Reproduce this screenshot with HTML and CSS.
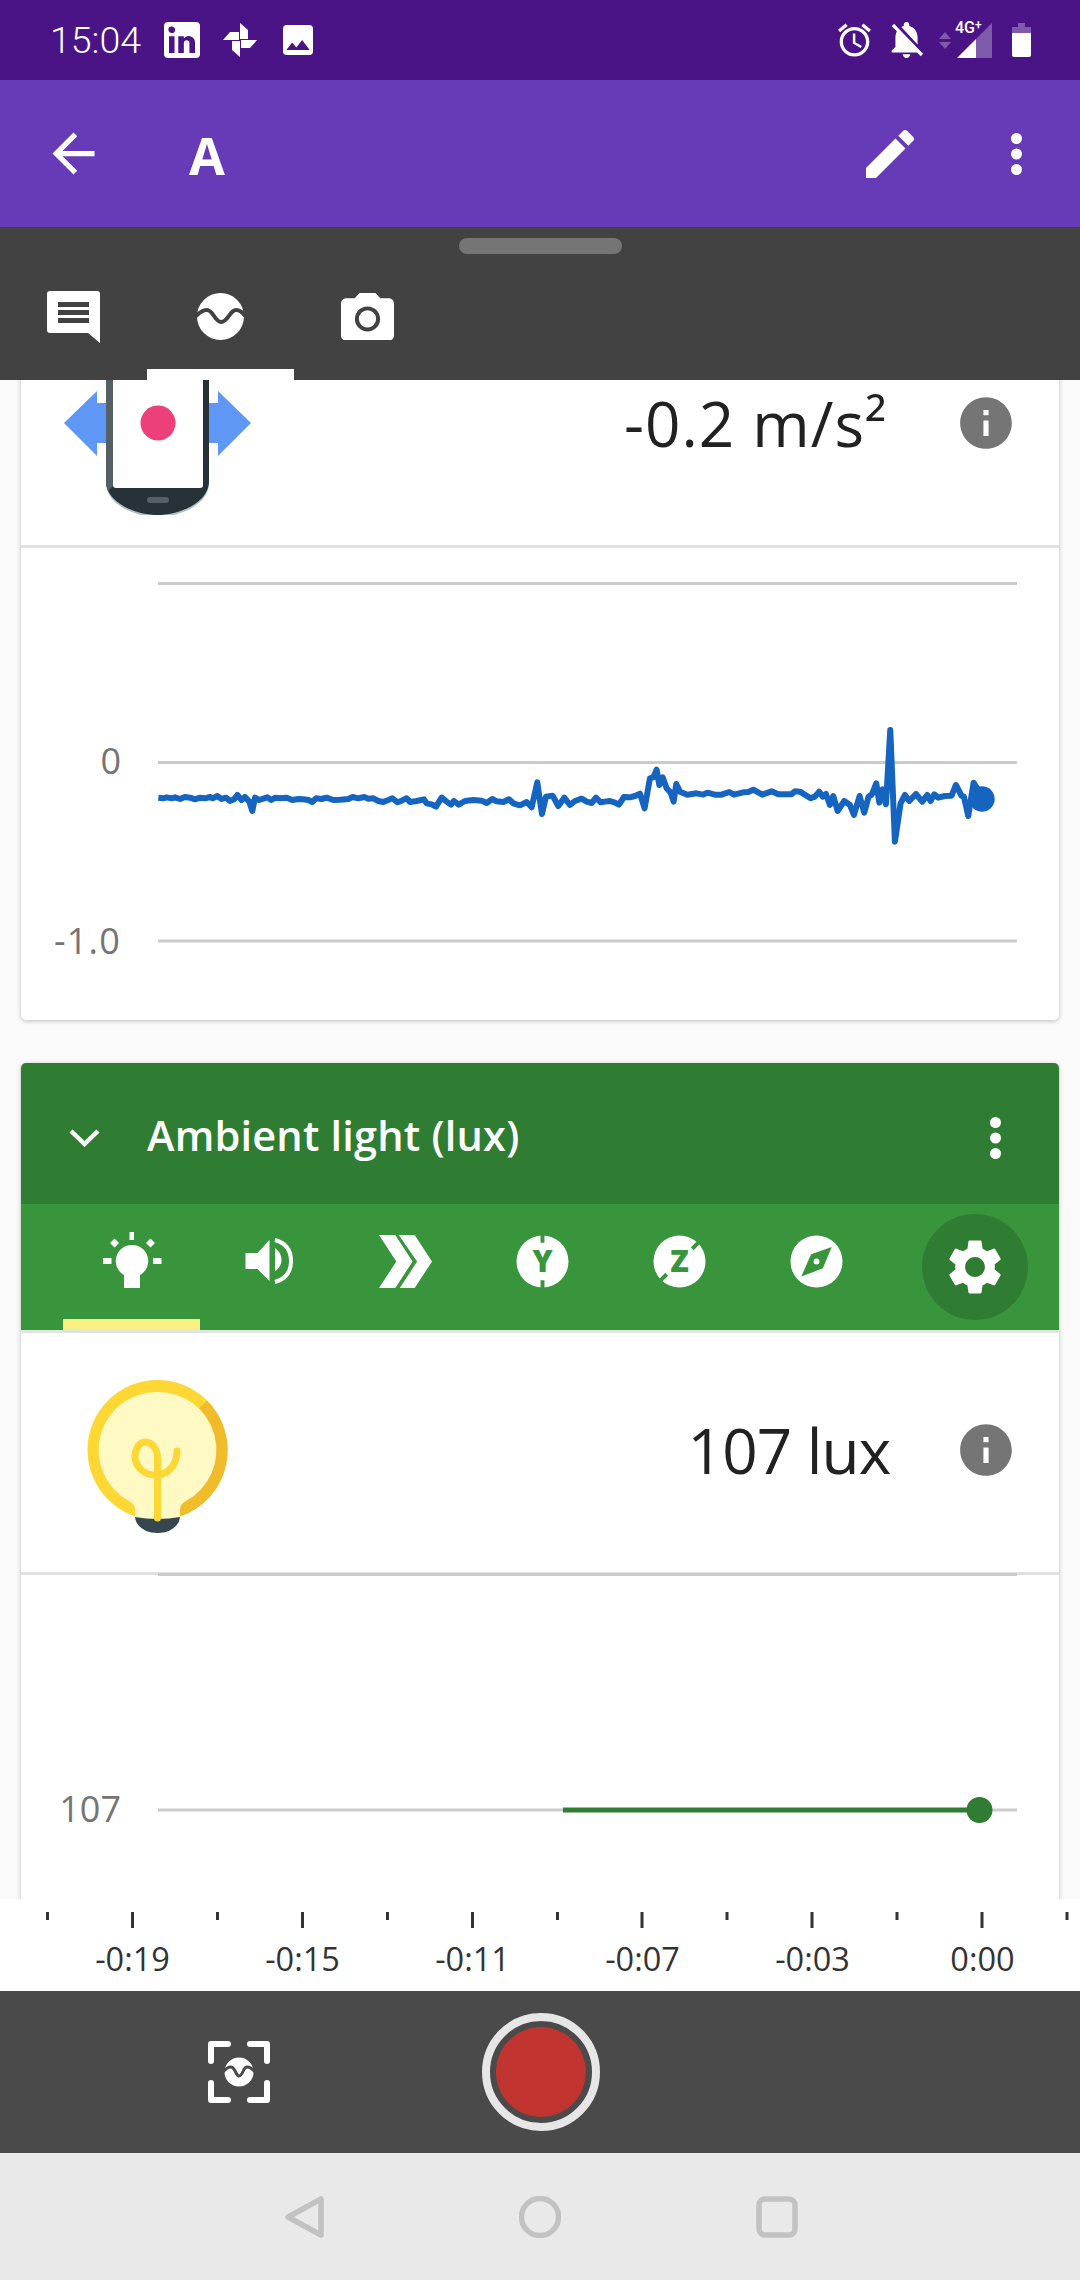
FILE: index.html
```html
<!DOCTYPE html>
<html lang="en">
<head>
  <meta charset="UTF-8" />
  <meta name="viewport" content="width=device-width, initial-scale=1.0"/>
  <title>Experiment A</title>
  <link rel="stylesheet" href="styles.css">
</head>
<body>
<div class="screen">

  <!-- Status bar -->
  <div class="status-bar">
    <span class="clock">15:04</span>
    <svg class="ic-linkedin" viewBox="3 3 18 18"><path d="M19 3a2 2 0 0 1 2 2v14a2 2 0 0 1-2 2H5a2 2 0 0 1-2-2V5a2 2 0 0 1 2-2h14m-.5 15.5v-5.3a3.26 3.26 0 0 0-3.26-3.26c-.85 0-1.84.52-2.32 1.3v-1.11h-2.79v8.37h2.79v-4.93c0-.77.62-1.4 1.39-1.4a1.4 1.4 0 0 1 1.4 1.4v4.93h2.79M6.88 8.56a1.68 1.68 0 0 0 1.68-1.68c0-.93-.75-1.69-1.68-1.69a1.69 1.69 0 0 0-1.69 1.69c0 .93.76 1.68 1.69 1.68m1.39 9.94v-8.37H5.5v8.37h2.77z"/></svg>
    <svg class="ic-pinwheel" viewBox="-17 -17 34 34">
      <path id="petal" d="M0 -1V-17L8 -10V-1Z"/>
      <use href="#petal" transform="rotate(90)"/>
      <use href="#petal" transform="rotate(180)"/>
      <use href="#petal" transform="rotate(270)"/>
    </svg>
    <svg class="ic-image" viewBox="3 3 18 18"><path d="M21 19V5c0-1.1-.9-2-2-2H5c-1.1 0-2 .9-2 2v14c0 1.1.9 2 2 2h14c1.1 0 2-.9 2-2zM8.5 13.5l2.5 3.01L14.5 12l4.5 6H5l3.5-4.5z"/></svg>

    <svg class="ic-alarm" viewBox="2 1.86 20 20.14"><path d="M22 5.72l-4.6-3.86-1.29 1.53 4.6 3.86L22 5.72zM7.88 3.39L6.6 1.86 2 5.71l1.29 1.53 4.59-3.85zM12.5 8H11v6l4.75 2.85.75-1.23-4-2.37V8zM12 4c-4.97 0-9 4.03-9 9s4.03 9 9 9c4.97 0 9-4.03 9-9s-4.03-9-9-9zm0 16c-3.87 0-7-3.13-7-7s3.13-7 7-7 7 3.13 7 7-3.13 7-7 7z"/></svg>
    <svg class="ic-belloff" viewBox="3 2.5 18 19.5"><path d="M20 18.69L7.84 6.14 5.27 3.49 4 4.76l2.8 2.8v.01c-.52.99-.8 2.16-.8 3.42v5l-2 2v1h13.73l2 2L21 19.72l-1-1.03zM12 22c1.11 0 2-.89 2-2h-4c0 1.11.89 2 2 2zm6-7.32V11c0-3.08-1.64-5.64-4.5-6.32V4c0-.83-.67-1.5-1.5-1.5s-1.5.67-1.5 1.5v.68c-.15.03-.29.08-.42.12-.1.03-.2.07-.3.11h-.01c-.2.08-.4.17-.59.27-.01 0-.01 0-.02.01L18 14.68z"/></svg>
    <svg class="ic-updown" viewBox="0 0 12 17"><path d="M6 0l6 7H0zM0 10h12l-6 7z"/></svg>
    <div class="signal">
      <svg class="ic-signal" viewBox="0 0 35 35">
        <path class="dim" d="M19 16L35 0V35H19Z"/>
        <path d="M0 35L19 16V35Z"/>
      </svg>
      <span class="net">4G<sup>+</sup></span>
    </div>
    <svg class="ic-battery" viewBox="0 0 19 34">
      <path class="dim" d="M6 0H13V4H19V10H0V4H6Z"/>
      <path d="M0 10H19V32a2 2 0 0 1-2 2H2a2 2 0 0 1-2-2Z"/>
    </svg>
  </div>

  <!-- App bar -->
  <div class="app-bar">
    <svg class="ic-back" viewBox="0 0 24 24"><path d="M20 11H7.83l5.59-5.59L12 4l-8 8 8 8 1.41-1.41L7.83 13H20v-2z"/></svg>
    <span class="app-title">A</span>
    <svg class="ic-edit" viewBox="0 0 24 24"><path d="M3 17.25V21h3.75L17.81 9.94l-3.75-3.75L3 17.25zM20.71 7.04c.39-.39.39-1.02 0-1.41l-2.34-2.34c-.39-.39-1.02-.39-1.41 0l-1.83 1.83 3.75 3.75 1.83-1.83z"/></svg>
    <svg class="ic-more" viewBox="0 0 11 42"><circle cx="5.5" cy="5.5" r="5.5"/><circle cx="5.5" cy="21" r="5.5"/><circle cx="5.5" cy="36.5" r="5.5"/></svg>
  </div>

  <!-- Panel with note / sensor / camera tabs -->
  <div class="panel">
    <div class="handle"></div>
    <div class="panel-tabs">
      <div class="panel-tab">
        <svg class="ic-note" viewBox="0 0 53 52">
          <path d="M3 0H50a3 3 0 0 1 3 3V52L41 42H3a3 3 0 0 1-3-3V3a3 3 0 0 1 3-3Z"/>
          <path class="cut" d="M11 11H42V16H11ZM11 19H42V24H11ZM11 27H42V32H11Z"/>
        </svg>
      </div>
      <div class="panel-tab active">
        <svg class="ic-wave" viewBox="0 0 47 47">
          <circle cx="23.5" cy="23.5" r="23.5"/>
          <path class="cut-line" d="M-1 23Q5 17 10 17C16 17 18 29 24 29C31 29 33 17 39 17Q44 17 48 23"/>
        </svg>
      </div>
      <div class="panel-tab">
        <svg class="ic-camera" viewBox="2 2 20 18">
          <path d="M9 2L7.17 4H4c-1.1 0-2 .9-2 2v12c0 1.1.9 2 2 2h16c1.1 0 2-.9 2-2V6c0-1.1-.9-2-2-2h-3.17L15 2H9z"/>
          <circle class="cut-ring" cx="12" cy="11.8" r="4"/>
        </svg>
      </div>
    </div>
  </div>

  <!-- Scrolling cards -->
  <div class="content">
    <div class="card card-first">
      <div class="sensor-row">
        <svg class="sensor-icon" viewBox="0 0 187 184">
          <path class="arrow" d="M0 92L33 60V72H42V112H33V125Z"/>
          <path class="arrow" d="M187 92L154 60V72H145V112H154V125Z"/>
          <path class="phone-edge" d="M42 0H145V152C145 174 115 186 93.5 186C72 186 42 174 42 152Z"/>
          <path class="phone-body" d="M42 0H145V150C145 172 115 184 93.5 184C72 184 42 172 42 150Z"/>
          <path class="phone-side" d="M42 0H49V155L44 160C43 157 42 154 42 150Z"/>
          <path class="phone-screen" d="M49 0H139V154a3 3 0 0 1-3 3H52a3 3 0 0 1-3-3Z"/>
          <rect class="phone-slot" x="83" y="166" width="22" height="6" rx="3"/>
          <circle class="phone-dot" cx="94" cy="92" r="17.5"/>
        </svg>
        <span class="value value-accel">-0.2 m/s²</span>
        <svg class="ic-info" viewBox="0 0 24 24"><path d="M12 2C6.48 2 2 6.48 2 12s4.48 10 10 10 10-4.48 10-10S17.52 2 12 2zm1 15h-2v-6h2v6zm0-8h-2V7h2v2z"/></svg>
      </div>
      <svg class="chart chart-accel" viewBox="21 548 1038 472">
        <line class="grid" x1="158" y1="583.5" x2="1017" y2="583.5"/>
        <line class="grid" x1="158" y1="762.5" x2="1017" y2="762.5"/>
        <line class="grid" x1="158" y1="941" x2="1017" y2="941"/>
        <text class="axis-num" x="121" y="774" text-anchor="end">0</text>
        <text class="axis-num axis-num-wide" x="121" y="954" text-anchor="end">-1.0</text>
        <!-- traced trace, drawn in 3x units -->
        <g transform="translate(130 700) scale(.3333)">
          <polyline class="trace" points="85,293 100,295 110,292 125,295 135,292 150,297 165,291 180,293 195,298 210,293 225,295 240,291 248,295 262,288 275,297 288,293 300,303 312,298 322,285 335,300 345,291 358,305 367,333 375,293 388,300 400,296 412,292 424,300 436,293 450,295 470,293 487,300 505,297 520,298 535,300 547,306 558,295 575,297 590,293 610,300 630,299 655,297 668,291 685,295 703,291 715,296 730,295 745,303 760,306 775,300 787,295 803,307 815,302 830,295 840,306 860,303 882,298 890,310 905,313 918,320 935,293 950,305 963,314 972,303 986,314 1005,303 1030,300 1055,302 1070,309 1087,297 1100,304 1120,306 1137,298 1150,310 1170,316 1190,306 1205,322 1222,247 1236,342 1248,290 1268,287 1285,318 1303,293 1320,315 1335,303 1355,296 1370,305 1385,309 1398,293 1412,307 1425,305 1440,303 1455,308 1467,314 1482,291 1500,292 1515,288 1530,281 1544,325 1560,235 1570,232 1580,209 1588,255 1598,232 1610,265 1622,278 1631,305 1639,252 1650,275 1672,284 1700,280 1720,284 1732,278 1755,284 1775,284 1798,276 1812,284 1840,277 1855,276 1870,269 1897,284 1925,274 1945,283 1985,283 1995,274 2010,275 2042,295 2055,290 2068,275 2078,290 2088,282 2100,315 2110,288 2123,333 2143,303 2160,315 2172,345 2189,288 2203,338 2216,290 2225,285 2239,250 2248,308 2258,268 2268,313 2281,90 2295,425 2312,310 2325,285 2338,303 2358,282 2377,305 2392,285 2402,303 2413,283 2425,293 2445,288 2465,287 2478,255 2495,288 2502,290 2515,348 2531,248 2545,270 2556,297"/>
        </g>
        <circle class="trace-dot" cx="982" cy="799" r="12.7"/>
      </svg>
    </div>

    <div class="card card-light">
      <div class="card-header">
        <svg class="ic-chevron" viewBox="0 0 31 19"><polyline points="2,3 15.5,16 29,3"/></svg>
        <span class="card-title">Ambient light (lux)</span>
        <svg class="ic-more ic-more-card" viewBox="0 0 11 42"><circle cx="5.5" cy="5.5" r="5.5"/><circle cx="5.5" cy="21" r="5.5"/><circle cx="5.5" cy="36.5" r="5.5"/></svg>
      </div>

      <div class="sensor-tabs">
        <div class="sensor-tab active">
          <svg class="ic-tab" viewBox="0 0 58 58">
            <path d="M26.500 0H31V8H26.500ZM0 26H8.500V32H0ZM50 26H58.500V32H50ZM11.500 6.500L16 11L11.500 15.500L7 11ZM47.500 6.500L52 11L47.500 15.500L43 11Z"/>
            <path d="M29 13A16 16 0 0 1 37 43V56H21V43A16 16 0 0 1 29 13Z"/>
          </svg>
        </div>
        <div class="sensor-tab">
          <svg class="ic-tab ic-speaker" viewBox="0 0 48 48">
            <path d="M.5 16H12.500L24.500 3V44L12.500 32H.5Z"/>
            <path d="M30 11Q36.500 16 36.500 23Q36.500 30 30 34Z"/>
            <path class="stroke" d="M30 3C41 6 46 14 46 24C46 34 41 42 30 45"/>
          </svg>
        </div>
        <div class="sensor-tab">
          <svg class="ic-tab" viewBox="1100 552 153 160" preserveAspectRatio="none">
            <path d="M1100 552H1147L1197 632L1147 712H1100L1150 632ZM1157 552H1203L1253 632L1203 712H1160L1210 632Z"/>
          </svg>
        </div>
        <div class="sensor-tab">
          <svg class="ic-tab" viewBox="-27 -27 54 54">
            <circle r="26.500"/>
            <path class="notch" d="M0 -27V-19M0 19V27"/>
            <text class="axis-letter" y="11" text-anchor="middle">Y</text>
          </svg>
        </div>
        <div class="sensor-tab">
          <svg class="ic-tab" viewBox="-27 -27 54 54">
            <circle r="26.500"/>
            <path class="notch" d="M19 -19L13 -13M-19 19L-13 13"/>
            <text class="axis-letter" y="11" text-anchor="middle">Z</text>
          </svg>
        </div>
        <div class="sensor-tab">
          <svg class="ic-tab" viewBox="-27 -27 54 54">
            <circle r="26.500"/>
            <path class="notch-fill" d="M15.500 -14.700L6.500 7L-15.500 15.300L-5.500 -7.300Z"/>
            <circle cx="0" cy="0" r="3"/>
          </svg>
        </div>
        <div class="settings-btn">
          <svg class="ic-gear" viewBox="0 0 24 24"><path d="M19.14 12.94c.04-.3.06-.61.06-.94 0-.32-.02-.64-.07-.94l2.03-1.58c.18-.14.23-.41.12-.61l-1.92-3.32c-.12-.22-.37-.29-.59-.22l-2.39.96c-.5-.38-1.03-.7-1.62-.94l-.36-2.54c-.04-.24-.24-.41-.48-.41h-3.84c-.24 0-.43.17-.47.41l-.36 2.54c-.59.24-1.13.57-1.62.94l-2.39-.96c-.22-.08-.47 0-.59.22L2.74 8.87c-.12.21-.08.47.12.61l2.03 1.58c-.05.3-.09.63-.09.94s.02.64.07.94l-2.03 1.58c-.18.14-.23.41-.12.61l1.92 3.32c.12.22.37.29.59.22l2.39-.96c.5.38 1.03.7 1.62.94l.36 2.54c.05.24.24.41.48.41h3.84c.24 0 .44-.17.47-.41l.36-2.54c.59-.24 1.13-.56 1.62-.94l2.39.96c.22.08.47 0 .59-.22l1.92-3.32c.12-.22.07-.47-.12-.61l-2.01-1.58zM12 15.6c-1.98 0-3.6-1.62-3.6-3.6s1.62-3.6 3.6-3.6 3.6 1.62 3.6 3.6-1.62 3.6-3.6 3.6z"/></svg>
        </div>
      </div>

      <div class="sensor-row sensor-row-light">
        <svg class="sensor-icon" viewBox="0 0 187 184">
          <circle class="bulb-rim" cx="93.500" cy="92" r="70"/>
          <path class="bulb-shade" d="M143 42.500A70 70 0 0 1 116 158.500V150Q116 143 122 139A58 58 0 0 0 134.500 51Z"/>
          <path class="bulb-cap" d="M71 159H116C115 169 105 175 93.500 175C82 175 72 169 71 159Z"/>
          <path class="bulb-glass" d="M93.500 34A58 58 0 0 1 122 143Q116 146 116 152V159Q105 161 93.500 161Q82 161 71 159V152Q71 146 65 143A58 58 0 0 1 93.500 34Z"/>
          <path class="bulb-wire" d="M93.500 160V100C93.500 90 87 84 81 84C75 84 71 92 71 98C71 110 82 118 93.500 117C105 116 113 106 113 93"/>
        </svg>
        <span class="value value-light">107 lux</span>
        <svg class="ic-info" viewBox="0 0 24 24"><path d="M12 2C6.48 2 2 6.48 2 12s4.48 10 10 10 10-4.48 10-10S17.52 2 12 2zm1 15h-2v-6h2v6zm0-8h-2V7h2v2z"/></svg>
      </div>
      <svg class="chart chart-light" viewBox="21 1575 1038 400">
        <line class="grid" x1="158" y1="1574.500" x2="1017" y2="1574.500"/>
        <line class="grid" x1="158" y1="1810" x2="1017" y2="1810"/>
        <text class="axis-num" x="121" y="1822" text-anchor="end">107</text>
        <line class="level" x1="563" y1="1810" x2="979" y2="1810"/>
        <circle class="level-dot" cx="979.500" cy="1810" r="13"/>
      </svg>
    </div>
  </div>

  <!-- Time axis -->
  <div class="time-axis">
    <svg class="ticks" viewBox="0 0 1080 16">
      <path d="M47.500 0V8M132.500 0V16M217.500 0V8M302.500 0V16M387.500 0V8M472.500 0V16M557.500 0V8M642 0V16M727 0V8M812 0V16M897 0V8M982 0V16M1067 0V8"/>
    </svg>
    <div class="time-labels">
      <span>-0:19</span>
      <span>-0:15</span>
      <span>-0:11</span>
      <span>-0:07</span>
      <span>-0:03</span>
      <span>0:00</span>
    </div>
  </div>

  <!-- Record bar -->
  <div class="record-bar">
    <svg class="ic-snapshot" viewBox="0 0 62 62">
      <path class="bracket" d="M3 20V3H20M42 3H59V20M59 42V59H42M20 59H3V42"/>
      <circle cx="31" cy="31" r="14.500"/>
      <path class="cut-line-thin" d="M15 31Q19 26 23 26C27 26 28 35 31 35C35 35 35 26 39 26Q43 26 47 31"/>
    </svg>
    <div class="record-btn"><div class="record-dot"></div></div>
  </div>

  <!-- Android nav -->
  <div class="nav-bar">
    <svg class="nav-icon" viewBox="0 0 42 42"><path d="M4 21L37 3V39Z"/></svg>
    <svg class="nav-icon" viewBox="0 0 42 42"><circle cx="21" cy="21" r="18.500"/></svg>
    <svg class="nav-icon nav-recents" viewBox="0 0 42 42"><rect x="3" y="3" width="36" height="36" rx="6"/></svg>
  </div>
</div>
</body>
</html>
```

FILE: styles.css
```css
/* Global reset */
* {
  margin: 0;
  padding: 0;
  box-sizing: border-box;
}

body {
  font-family: 'Open Sans', 'Noto Sans', sans-serif;
  background: #fafafa;
  color: #212121;
}

svg {
  display: block;
  flex: none;
}

.screen {
  width: 1080px;
  height: 2280px;
  display: flex;
  flex-direction: column;
  overflow: hidden;
}

/* Status bar */
.status-bar {
  height: 80px;
  flex: none;
  background: #4a1486;
  display: flex;
  align-items: center;
  padding-left: 50px;
  color: #fff;
}
.status-bar svg { fill: #fff; }
.status-bar .dim { fill: rgba(255, 255, 255, 0.3); }

.clock {
  width: 114px;
  font-family: Roboto, sans-serif;
  font-size: 37.5px;
  font-weight: 300;
}
.ic-linkedin { width: 36px; height: 36px; }
.ic-pinwheel { width: 34px; height: 34px; margin-left: 23px; }
.ic-image { width: 30px; height: 30px; margin-left: 26px; }
.ic-alarm { width: 33px; height: 34px; margin-left: 525px; }
.ic-belloff { width: 35px; height: 36px; margin-left: 18px; }
.ic-updown { width: 12px; height: 17px; margin-left: 15px; fill: rgba(255, 255, 255, 0.3) !important; }

.signal {
  position: relative;
  width: 35px;
  height: 35px;
  margin-left: 6px;
  margin-top: 1px;
}
.ic-signal { width: 35px; height: 35px; }
.net {
  position: absolute;
  left: -2px;
  top: -3px;
  font-family: Roboto, sans-serif;
  font-size: 16px;
  font-weight: 500;
  line-height: 16px;
  white-space: nowrap;
}
.net sup {
  font-size: 12px;
  line-height: 0;
  vertical-align: 4px;
}
.ic-battery { width: 19px; height: 34px; margin-left: 20px; }

/* App bar */
.app-bar {
  height: 147px;
  flex: none;
  background: #673ab7;
  display: flex;
  align-items: center;
  color: #fff;
}
.app-bar svg { fill: #fff; }
.ic-back { width: 63px; height: 63px; margin-left: 42px; }
.app-title {
  margin-left: 84px;
  font-size: 52px;
  font-weight: 700;
  line-height: 1;
  padding-top: 2px;
}
.ic-edit { width: 64px; height: 64px; margin-left: auto; }
.ic-more { width: 11px; height: 42px; margin-left: 89px; margin-right: 58px; }

/* Dark panel */
.panel {
  height: 153px;
  flex: none;
  background: #424242;
  display: flex;
  flex-direction: column;
  align-items: center;
  padding-top: 11px;
}
.handle {
  width: 163px;
  height: 16px;
  background: #757575;
  border-radius: 8px;
  flex: none;
}
.panel-tabs {
  width: 100%;
  flex: 1;
  display: flex;
}
.panel-tab {
  width: 147px;
  padding-top: 10px;
  border-bottom: 11px solid transparent;
  display: flex;
  align-items: center;
  justify-content: center;
}
.panel-tab.active { border-bottom-color: #fff; }
.panel-tab svg { fill: #fff; }
.panel-tab .cut { fill: #424242; }
.panel-tab .cut-line {
  fill: none;
  stroke: #424242;
  stroke-width: 4;
}
.panel-tab .cut-ring {
  fill: #fff;
  stroke: #424242;
  stroke-width: 1.5;
}
.ic-note { width: 53px; height: 52px; }
.ic-wave { width: 47px; height: 47px; }
.ic-camera { width: 53px; height: 47.7px; }

/* Cards */
.content {
  height: 1519px;
  flex: none;
  overflow: hidden;
  padding: 0 21px;
}
.card {
  background: #fff;
  border-radius: 5px;
  box-shadow: 0 1px 4px rgba(0, 0, 0, 0.25);
  margin-bottom: 43px;
}
.card-first { margin-top: -72px; }

.sensor-row {
  height: 240px;
  padding: 0 42.5px 7px 43px;
  border-bottom: 3px solid #e0e0e0;
  display: flex;
  align-items: center;
}
.sensor-row-light {
  height: 242px;
  padding-bottom: 5px;
}
.sensor-icon { width: 187px; height: 184px; }
.value {
  margin-left: auto;
  margin-right: 64px;
  font-size: 62px;
  font-weight: 400;
  white-space: nowrap;
}
.value-accel {
  margin-right: 67px;
  letter-spacing: 1px;
}
.value-light { letter-spacing: -0.8px; }
.ic-info { width: 62px; height: 62px; fill: #757575; }

/* Phone and bulb pictures */
.arrow { fill: #5e97f6; }
.phone-edge { fill: #b0bec5; }
.phone-body { fill: #263238; }
.phone-side { fill: #546066; }
.phone-screen { fill: #fff; }
.phone-slot { fill: #546066; }
.phone-dot { fill: #ec407a; }
.bulb-rim { fill: #fdd835; }
.bulb-shade { fill: #f0bc2c; }
.bulb-cap { fill: #37474f; }
.bulb-glass { fill: #fff9c4; }
.bulb-wire {
  fill: none;
  stroke: #fdd835;
  stroke-width: 7;
  stroke-linecap: round;
}

/* Charts */
.chart { width: 1038px; }
.chart-accel { height: 472px; }
.chart-light { height: 400px; overflow: visible; }
.grid {
  stroke: #cbcbcb;
  stroke-width: 3;
}
.axis-num {
  font-family: 'Open Sans', sans-serif;
  font-size: 36px;
  fill: #757575;
}
.axis-num-wide { letter-spacing: 1.2px; }
.trace {
  fill: none;
  stroke: #1565c0;
  stroke-width: 18;
  stroke-linejoin: round;
  stroke-linecap: butt;
}
.trace-dot { fill: #1565c0; }
.level {
  stroke: #2e7d32;
  stroke-width: 5;
}
.level-dot { fill: #2e7d32; }

/* Light card header */
.card-header {
  height: 141px;
  background: #2e7d32;
  border-radius: 5px 5px 0 0;
  padding-top: 9px;
  display: flex;
  align-items: center;
  color: #fff;
}
.ic-chevron {
  width: 31px;
  height: 19px;
  margin-left: 48px;
  margin-top: -2px;
  fill: none;
  stroke: #fff;
  stroke-width: 4.5;
}
.card-title {
  margin-left: 47px;
  margin-top: -7px;
  font-size: 41.5px;
  font-weight: 600;
  letter-spacing: 0.2px;
  white-space: nowrap;
}
.ic-more-card {
  margin-left: auto;
  margin-right: 58px;
  fill: #fff;
}

/* Sensor tabs */
.sensor-tabs {
  height: 129px;
  background: #38953c;
  border-bottom: 3px solid #e0e5e0;
  padding: 0 31px 0 42px;
  display: flex;
}
.sensor-tab {
  width: 137px;
  padding-bottom: 1px;
  border-bottom: 11px solid transparent;
  display: flex;
  align-items: center;
  justify-content: center;
}
.sensor-tab.active { border-bottom-color: #f8f081; }
.ic-tab { width: 53px; height: 53px; fill: #fff; overflow: visible; }
.ic-tab.ic-speaker { width: 48px; height: 48px; }
.sensor-tab.active .ic-tab { width: 58px; height: 58px; }
.sensor-tab .stroke {
  fill: none;
  stroke: #fff;
  stroke-width: 4;
}
.notch {
  fill: none;
  stroke: #38953c;
  stroke-width: 4;
}
.notch-fill { fill: #38953c; }
.axis-letter {
  font-family: 'Open Sans', sans-serif;
  font-size: 31px;
  font-weight: 800;
  fill: #38953c;
}
.settings-btn {
  width: 106px;
  height: 106px;
  margin-left: auto;
  margin-top: 10px;
  border-radius: 50%;
  background: #2e7d32;
  display: flex;
  align-items: center;
  justify-content: center;
}
.ic-gear { width: 66px; height: 66px; fill: #fff; }

/* Time axis */
.time-axis {
  height: 92px;
  flex: none;
  background: #fff;
  padding-top: 13px;
}
.ticks {
  width: 1080px;
  height: 16px;
  fill: none;
  stroke: #333;
  stroke-width: 3;
}
.time-labels {
  display: grid;
  grid-template-columns: repeat(6, 170px);
  padding-left: 47.5px;
  margin-top: 9px;
  font-size: 32.5px;
  line-height: 44px;
  color: #333;
  text-align: center;
}

/* Record bar */
.record-bar {
  height: 162px;
  flex: none;
  background: #4a4a4a;
  position: relative;
  display: flex;
  align-items: center;
}
.ic-snapshot { width: 62px; height: 62px; margin-left: 208px; fill: #fff; }
.ic-snapshot .bracket {
  fill: none;
  stroke: #fff;
  stroke-width: 6;
  stroke-linecap: round;
  stroke-linejoin: round;
}
.ic-snapshot .cut-line-thin {
  fill: none;
  stroke: #4a4a4a;
  stroke-width: 3;
}
.record-btn {
  width: 118px;
  height: 118px;
  margin-left: 212px;
  border: 8px solid #e6e6e6;
  border-radius: 50%;
  display: flex;
  align-items: center;
  justify-content: center;
}
.record-dot {
  width: 90px;
  height: 90px;
  border-radius: 50%;
  background: #c13430;
}

/* Android nav */
.nav-bar {
  flex: 1;
  background: #e9e9e9;
  display: flex;
  align-items: center;
  padding-left: 284px;
  gap: 193px;
}
.nav-recents { margin-left: 2px; }
.nav-icon {
  width: 42px;
  height: 42px;
  fill: none;
  stroke: #c2c2c2;
  stroke-width: 5.5;
  stroke-linejoin: round;
}
```
